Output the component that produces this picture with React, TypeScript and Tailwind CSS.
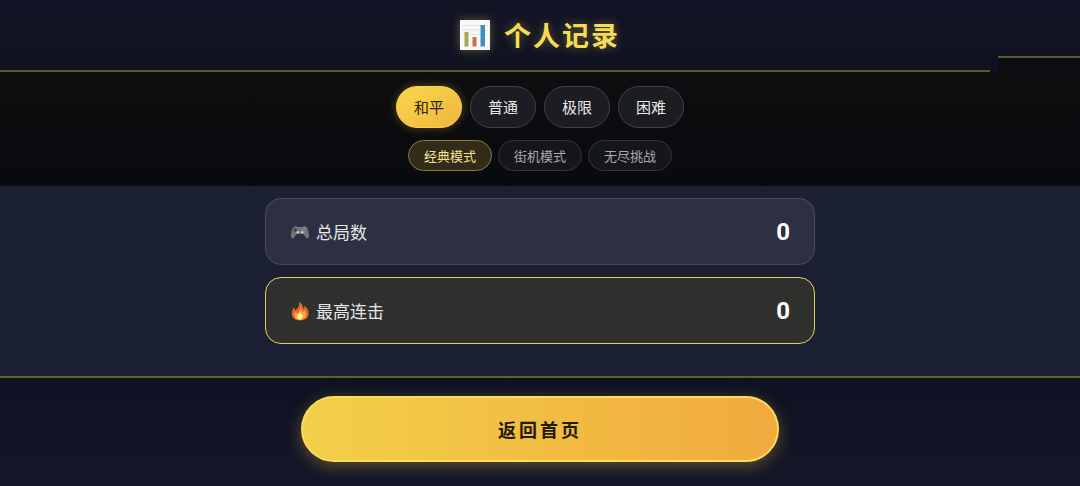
import { useState } from "react";
import clsx from "clsx";

const difficulties = ["和平", "普通", "极限", "困难"];
const modes = ["经典模式", "街机模式", "无尽挑战"];

const stats = [
  { label: "总局数", value: 0, icon: <GamepadIcon />, highlight: false },
  { label: "最高连击", value: 0, icon: <FlameIcon />, highlight: true },
];

export default function App() {
  const [difficulty, setDifficulty] = useState("和平");
  const [mode, setMode] = useState("经典模式");

  return (
    <div className="flex min-h-screen flex-col bg-[#1b2035] [font-family:Noto_Sans_CJK_SC,sans-serif] text-white">
      <header className="relative flex items-center justify-center gap-[14px] border-b-2 border-[#5f5931] bg-linear-to-b from-[#131426] to-[#0f1320] py-[18px]">
        <ChartIcon />
        <h1 className="text-[27px] leading-[34px] font-bold tracking-[2px] text-[#f6dc55] [text-shadow:0_0_10px_rgba(246,220,85,0.4)]">个人记录</h1>
        <div className="absolute right-0 -bottom-0.5 flex h-4 w-[90px]">
          <span className="w-2 bg-[#0e1222]" />
          <span className="flex-1 border-t-2 border-[#5f5931] bg-[#0d0e12]" />
        </div>
      </header>

      <nav className="flex flex-col items-center gap-3 bg-linear-to-b from-[#0e0e10] to-[#090a0e] pt-[14px] pb-[15px]">
        <div className="flex gap-2">
          {difficulties.map((name) => (
            <button
              key={name}
              type="button"
              aria-pressed={name === difficulty}
              onClick={() => setDifficulty(name)}
              className={clsx(
                "h-[42px] rounded-full border px-[17px] text-[15px]",
                name === difficulty
                  ? "border-[#f8d54a] bg-linear-to-br from-[#f8d84a] to-[#f0b440] text-[#2b2108] shadow-[0_0_10px_rgba(246,210,60,0.3)]"
                  : "border-[#404147] bg-[#1c1d22] text-[#e8e8ea]",
              )}
            >
              {name}
            </button>
          ))}
        </div>
        <div className="flex gap-1.5">
          {modes.map((name) => (
            <button
              key={name}
              type="button"
              aria-pressed={name === mode}
              onClick={() => setMode(name)}
              className={clsx(
                "h-[31px] rounded-full border px-[15px] text-[13px]",
                name === mode ? "border-[#8b7d36] bg-[#322b17] text-[#f3e391]" : "border-[#34353b] bg-[#15161b] text-[#a9aaae]",
              )}
            >
              {name}
            </button>
          ))}
        </div>
      </nav>

      <main className="mx-auto flex w-full max-w-[550px] flex-1 flex-col gap-3 pt-3">
        {stats.map((stat) => (
          <section
            key={stat.label}
            className={clsx(
              "flex h-[67px] items-center justify-between rounded-2xl border px-6",
              stat.highlight ? "border-[#e4d055] bg-[#30312f]" : "border-[#494d60] bg-[#2d3042]",
            )}
          >
            <h2 className="flex items-center gap-1.5 text-[17px] text-[#e6e7ea]">
              {stat.icon}
              {stat.label}
            </h2>
            <p className="[font-family:Roboto,sans-serif] text-2xl font-bold">{stat.value}</p>
          </section>
        ))}
      </main>

      <footer className="flex justify-center border-t-2 border-[#665d2f] bg-linear-to-b from-[#0e1222] to-[#141728] pt-[18px] pb-6">
        <button
          type="button"
          className="h-[66px] w-full max-w-[478px] rounded-full border-2 border-[#fbdc5c] bg-linear-to-r from-[#f2d048] to-[#f1aa3e] text-lg font-bold tracking-[3px] text-[#231a08] shadow-[0_4px_16px_rgba(240,190,60,0.35)]"
        >
          返回首页
        </button>
      </footer>
    </div>
  );
}

function ChartIcon() {
  return (
    <svg className="h-[30px] w-[30px] drop-shadow-[0_0_5px_rgba(246,220,85,0.35)]" viewBox="0 0 30 30" aria-hidden="true">
      <rect width="30" height="30" fill="#f8f9f6" />
      <path d="M2 5.500h26M2 10h26M2 14.500h26" stroke="#dbe0e3" strokeWidth="0.8" />
      <rect x="4.500" y="12" width="4" height="14.500" fill="#a5a95c" />
      <rect x="12.500" y="17" width="4" height="9.500" fill="#cf7042" />
      <rect x="20.500" y="5" width="4.500" height="21.500" fill="#3d8fbd" />
    </svg>
  );
}

function GamepadIcon() {
  return (
    <svg className="h-5 w-5" viewBox="0 0 20 20" aria-hidden="true">
      <path d="M4.300 4.500c1.300-.6 2.600-.2 3.200.5h5c.6-.7 1.900-1.100 3.200-.5 2 1 3.300 6 3.300 9 0 2-.6 2.900-1.700 2.900-1.700 0-2.600-3.400-4.300-4.300H7c-1.700.9-2.600 4.300-4.300 4.300-1.100 0-1.700-.9-1.700-2.900 0-3 1.300-8 3.300-9z" fill="#727579" />
      <path d="M5.300 6v4M3.300 8h4" stroke="#3d3f45" strokeWidth="1.300" />
      <circle cx="7.800" cy="10.300" r="1.300" fill="#c9cacc" />
      <circle cx="12.200" cy="10.300" r="1.300" fill="#c9cacc" />
      <circle cx="14.700" cy="6.300" r=".8" fill="#8ea66d" />
      <circle cx="13" cy="8" r=".8" fill="#8583b0" />
      <circle cx="16.400" cy="8" r=".8" fill="#b56b65" />
      <circle cx="14.700" cy="9.700" r=".8" fill="#6e93b5" />
    </svg>
  );
}

function FlameIcon() {
  return (
    <svg className="h-5 w-5" viewBox="0 0 20 20" aria-hidden="true">
      <path d="M9.200.8c2.800 1.600 3.800 4.600 4.500 7.200.8-.8.900-2 .6-3.400 2.600 1.800 4.300 4.900 4.300 8 0 4-3.400 6.900-8.300 6.900-5 0-8.500-2.700-8.500-6.700 0-2.800 1.100-4.400 1.600-6.300 1.100.7 1.600 1.700 1.900 2.900C8 7.600 9.800 4.500 9.200.8z" fill="#ea652c" />
      <path d="M10.300 6.200c.5 2.300 1.700 3 2.700 4.500.8-.3 1.300-.9 1.600-1.700 1 1.200 1.500 2.700 1.500 4.200 0 3.200-2.300 5.500-5.800 5.500-3.600 0-5.900-2-5.900-5 0-1.400.4-2.300.9-3.200.4.900.9 1.400 1.700 1.800 2-1.500 3.200-3.300 3.300-6.100z" fill="#f8aa3d" />
      <path d="M10.200 11.300c.3 1.500 2.600 2.300 2.600 4.300 0 1.700-1.200 2.900-2.800 2.900-1.700 0-2.900-1-2.900-2.600 0-1.900 2.800-2.700 3.100-4.600z" fill="#fdeba0" />
    </svg>
  );
}
